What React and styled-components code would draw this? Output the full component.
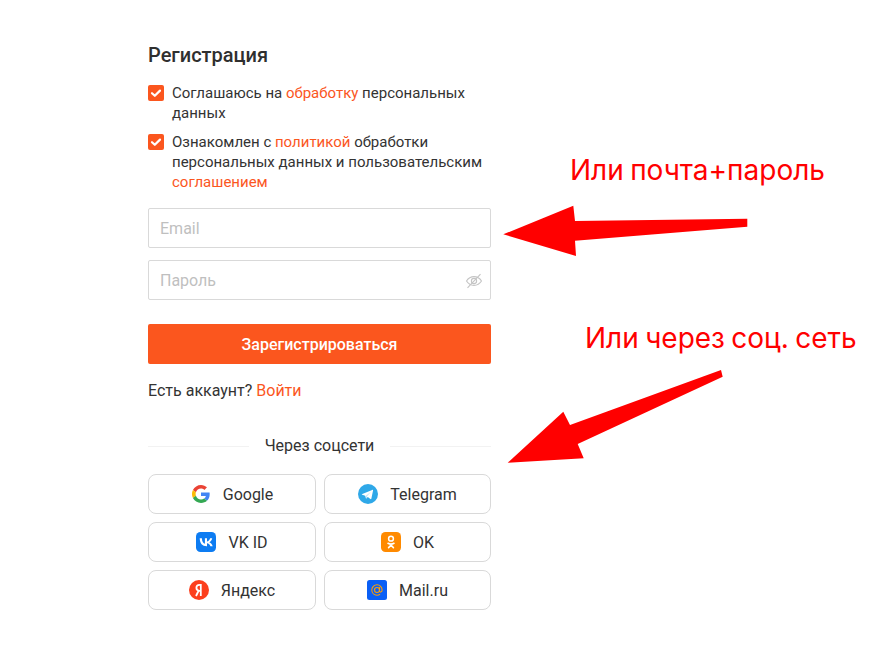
import React from "react";
import styled, { createGlobalStyle } from "styled-components";

const GlobalStyle = createGlobalStyle`
  html, body {
    margin: 0;
    padding: 0;
    background: #fff;
    font-family: Roboto, "Liberation Sans", sans-serif;
  }
`;

const socials = [
  { name: "Google", icon: <GoogleIcon /> },
  { name: "Telegram", icon: <TelegramIcon /> },
  { name: "VK ID", icon: <VkIcon /> },
  { name: "OK", icon: <OkIcon /> },
  { name: "Яндекс", icon: <YandexIcon /> },
  { name: "Mail.ru", icon: <MailIcon /> },
];

function GoogleIcon() {
  return (
    <svg width="20" height="20" viewBox="-2.500 -2.500 53 53">
      <path fill="#EA4335" d="M24 9.500c3.900 0 6.900 1.600 9.100 3.600l6.700-6.700C35.700 2.600 30.400 0 24 0 14.600 0 6.600 5.400 2.600 13.200l7.900 6.100C12.400 13.600 17.700 9.500 24 9.500z" />
      <path fill="#4285F4" d="M47 24.500c0-1.600-.1-3.100-.4-4.500H24v9h13c-.6 3-2.300 5.500-4.800 7.200l7.700 6C44.400 37.900 47 31.800 47 24.500z" />
      <path fill="#FBBC05" d="M10.500 28.700c-.5-1.400-.8-3-.8-4.700s.3-3.300.8-4.700l-7.900-6.100C.9 16.500 0 20.100 0 24s.9 7.500 2.600 10.800l7.900-6.100z" />
      <path fill="#34A853" d="M24 48c6.500 0 11.900-2.100 15.900-5.800l-7.700-6c-2.200 1.500-4.900 2.300-8.200 2.300-6.300 0-11.600-4.100-13.500-9.800l-7.900 6.100C6.600 42.600 14.600 48 24 48z" />
    </svg>
  );
}

function TelegramIcon() {
  return (
    <svg width="20" height="20" viewBox="0 0 20 20">
      <circle cx="10" cy="10" r="10" fill="#2FA8E8" />
      <path fill="#fff" d="M4.300 9.900l9.900-4c.5-.2 1 .1.800.9l-1.600 7.800c-.1.600-.5.700-1 .4l-2.600-1.900-1.300 1.200c-.3.300-.5.300-.6-.1l-.7-2.500-2.900-.9c-.6-.2-.6-.6 0-.9z" />
      <path fill="#C8E4F6" d="M8 11.500l5-3.800-3.900 4.500-.2 2-.9-.3z" />
    </svg>
  );
}

function VkIcon() {
  return (
    <svg width="20" height="20" viewBox="0 0 20 20">
      <rect width="20" height="20" rx="4.500" fill="#0D7CF2" />
      <path fill="#fff" d="M10.700 14.200C6.300 14.200 3.800 11.200 3.700 6.200h2.200c.1 3.700 1.700 5.200 3 5.500V6.200h2.100v3.200c1.300-.1 2.600-1.600 3.100-3.200h2.100c-.3 2-1.800 3.500-2.900 4.100 1.100.5 2.800 1.800 3.400 3.900h-2.300c-.5-1.500-1.700-2.700-3.400-2.900v2.900z" />
    </svg>
  );
}

function OkIcon() {
  return (
    <svg width="20" height="20" viewBox="0 0 20 20">
      <rect width="20" height="20" rx="4.500" fill="#FF8A00" />
      <circle cx="10" cy="6.700" r="2.400" fill="none" stroke="#fff" strokeWidth="1.500" />
      <path fill="none" stroke="#fff" strokeWidth="1.600" strokeLinecap="round" d="M7 11.300c1.900 1.100 4.100 1.100 6 0M10 12.400v.8M7.600 15.600l2.400-2.400 2.400 2.400" />
    </svg>
  );
}

function YandexIcon() {
  return (
    <svg width="20" height="20" viewBox="0 0 20 20">
      <circle cx="10" cy="10" r="10" fill="#FC3F1D" />
      <path fill="none" stroke="#fff" strokeWidth="1.800" d="M11.800 16V4.900h-1.300c-2 0-3.100 1.200-3.100 2.900 0 1.800 1 2.900 3 3h1.400M9.700 10.500L7 16" />
    </svg>
  );
}

function MailIcon() {
  return (
    <svg width="20" height="20" viewBox="0 0 20 20">
      <rect width="20" height="20" rx="2.500" fill="#0A5FF5" />
      <circle cx="10" cy="10" r="2.500" fill="none" stroke="#FF9E00" strokeWidth="1.100" />
      <path fill="none" stroke="#FF9E00" strokeWidth="1.100" strokeLinecap="round" d="M12.500 7.500v3.400c0 1.800 2.600 1.600 2.600-.9 0-3-2.200-5.200-5.100-5.200C7 4.800 4.800 7 4.800 10S7 15.200 10 15.200c1 0 1.900-.2 2.700-.7" />
    </svg>
  );
}

function EyeOffIcon() {
  return (
    <svg width="18" height="18" viewBox="0 0 18 18" fill="none" stroke="#c4c4c4" strokeWidth="1.100">
      <path d="M1.500 9C3.300 6.200 5.900 4.600 9 4.600s5.700 1.600 7.500 4.400c-1.800 2.800-4.400 4.400-7.500 4.400S3.300 11.800 1.500 9z" />
      <circle cx="9" cy="9" r="2.600" />
      <path d="M2.500 15.800L15.500 2.200" />
    </svg>
  );
}

function CheckMark() {
  return (
    <svg width="16" height="16" viewBox="0 0 16 16" fill="none">
      <path d="M4 8.200l2.800 2.600L12 5.600" stroke="#fff" strokeWidth="2.200" strokeLinecap="round" strokeLinejoin="round" />
    </svg>
  );
}

export default function App() {
  return (
    <Page>
      <GlobalStyle />
      <Form>
        <Title>Регистрация</Title>
        <Agreements>
          <Agreement>
            <Check>
              <CheckMark />
            </Check>
            <span>
              Соглашаюсь на <Link>обработку</Link> персональных данных
            </span>
          </Agreement>
          <Agreement>
            <Check>
              <CheckMark />
            </Check>
            <span>
              Ознакомлен с <Link>политикой</Link> обработки персональных данных
              и пользовательским <Link>соглашением</Link>
            </span>
          </Agreement>
        </Agreements>
        <Fields>
          <Field>
            <Placeholder>Email</Placeholder>
          </Field>
          <Field>
            <Placeholder>Пароль</Placeholder>
            <EyeOffIcon />
          </Field>
        </Fields>
        <Submit>Зарегистрироваться</Submit>
        <LoginRow>
          Есть аккаунт? <Link>Войти</Link>
        </LoginRow>
        <Divider>
          <span>Через соцсети</span>
        </Divider>
        <SocialGrid>
          {socials.map((item) => (
            <SocialButton key={item.name}>
              {item.icon}
              <span>{item.name}</span>
            </SocialButton>
          ))}
        </SocialGrid>
      </Form>

      <Note $left={570} $top={153}>Или почта+пароль</Note>
      <Note $left={585} $top={321}>Или через соц. сеть</Note>
      <Arrows width="884" height="664" viewBox="0 0 884 664">
        <path fill="#ff0000" d="M503.300 234.300L573.300 205.700 575 221 747.300 218.700 747.300 226.700 575 240.700 576 256z" />
        <path fill="#ff0000" d="M721 370L722.700 376.700 577.700 444 583.700 458.300 507.700 462.700 563.300 411.700 570 425z" />
      </Arrows>
    </Page>
  );
}

const Page = styled.div`
  position: relative;
  width: 884px;
  height: 664px;
  overflow: hidden;
  background: #fff;
`;

const Form = styled.div`
  width: 343px;
  margin-left: 148px;
  padding-top: 42px;
  color: #333;
`;

const Title = styled.h1`
  margin: 0 0 15px;
  font-size: 20px;
  line-height: 26px;
  font-weight: 500;
  color: #2f2f2f;
`;

const Agreements = styled.div`
  display: flex;
  flex-direction: column;
  gap: 9px;
`;

const Agreement = styled.div`
  display: flex;
  gap: 8px;
  font-size: 15px;
  line-height: 20px;
  color: #333;
`;

const Check = styled.div`
  flex: none;
  width: 16px;
  height: 16px;
  margin-top: 2px;
  border-radius: 2px;
  background: #fb561e;
  svg {
    display: block;
  }
`;

const Link = styled.a`
  color: #fb561e;
`;

const Fields = styled.div`
  display: flex;
  flex-direction: column;
  gap: 12px;
  margin-top: 16px;
`;

const Field = styled.div`
  display: flex;
  align-items: center;
  justify-content: space-between;
  box-sizing: border-box;
  height: 40px;
  padding: 0 7px 0 11px;
  border: 1px solid #d9d9d9;
  border-radius: 2px;
  svg {
    margin-top: 2px;
  }
`;

const Placeholder = styled.span`
  font-size: 16px;
  color: #bfbfbf;
`;

const Submit = styled.button`
  display: block;
  width: 100%;
  height: 40px;
  margin-top: 24px;
  border: 0;
  border-radius: 2px;
  background: #fb561e;
  color: #fff;
  font-family: inherit;
  font-size: 16px;
  font-weight: 500;
`;

const LoginRow = styled.div`
  margin-top: 17px;
  font-size: 16px;
  line-height: 20px;
  color: #333;
`;

const Divider = styled.div`
  display: flex;
  align-items: center;
  gap: 16px;
  margin-top: 35px;
  font-size: 16px;
  line-height: 20px;
  color: #333;
  white-space: nowrap;
  &::before,
  &::after {
    content: "";
    flex: 1;
    height: 1px;
    background: #f2f2f2;
  }
`;

const SocialGrid = styled.div`
  display: grid;
  grid-template-columns: 168px 167px;
  gap: 8px;
  margin-top: 18px;
`;

const SocialButton = styled.div`
  display: flex;
  align-items: center;
  justify-content: center;
  gap: 12px;
  box-sizing: border-box;
  height: 40px;
  border: 1px solid #d9d9d9;
  border-radius: 8px;
  font-size: 16px;
  color: #333;
  svg {
    flex: none;
  }
`;

const Note = styled.div`
  position: absolute;
  left: ${(p) => p.$left}px;
  top: ${(p) => p.$top}px;
  font-family: Inter, "Liberation Sans", sans-serif;
  font-size: 28px;
  line-height: 34px;
  word-spacing: -1.500px;
  color: #ff0000;
  white-space: nowrap;
`;

const Arrows = styled.svg`
  position: absolute;
  left: 0;
  top: 0;
  pointer-events: none;
`;
